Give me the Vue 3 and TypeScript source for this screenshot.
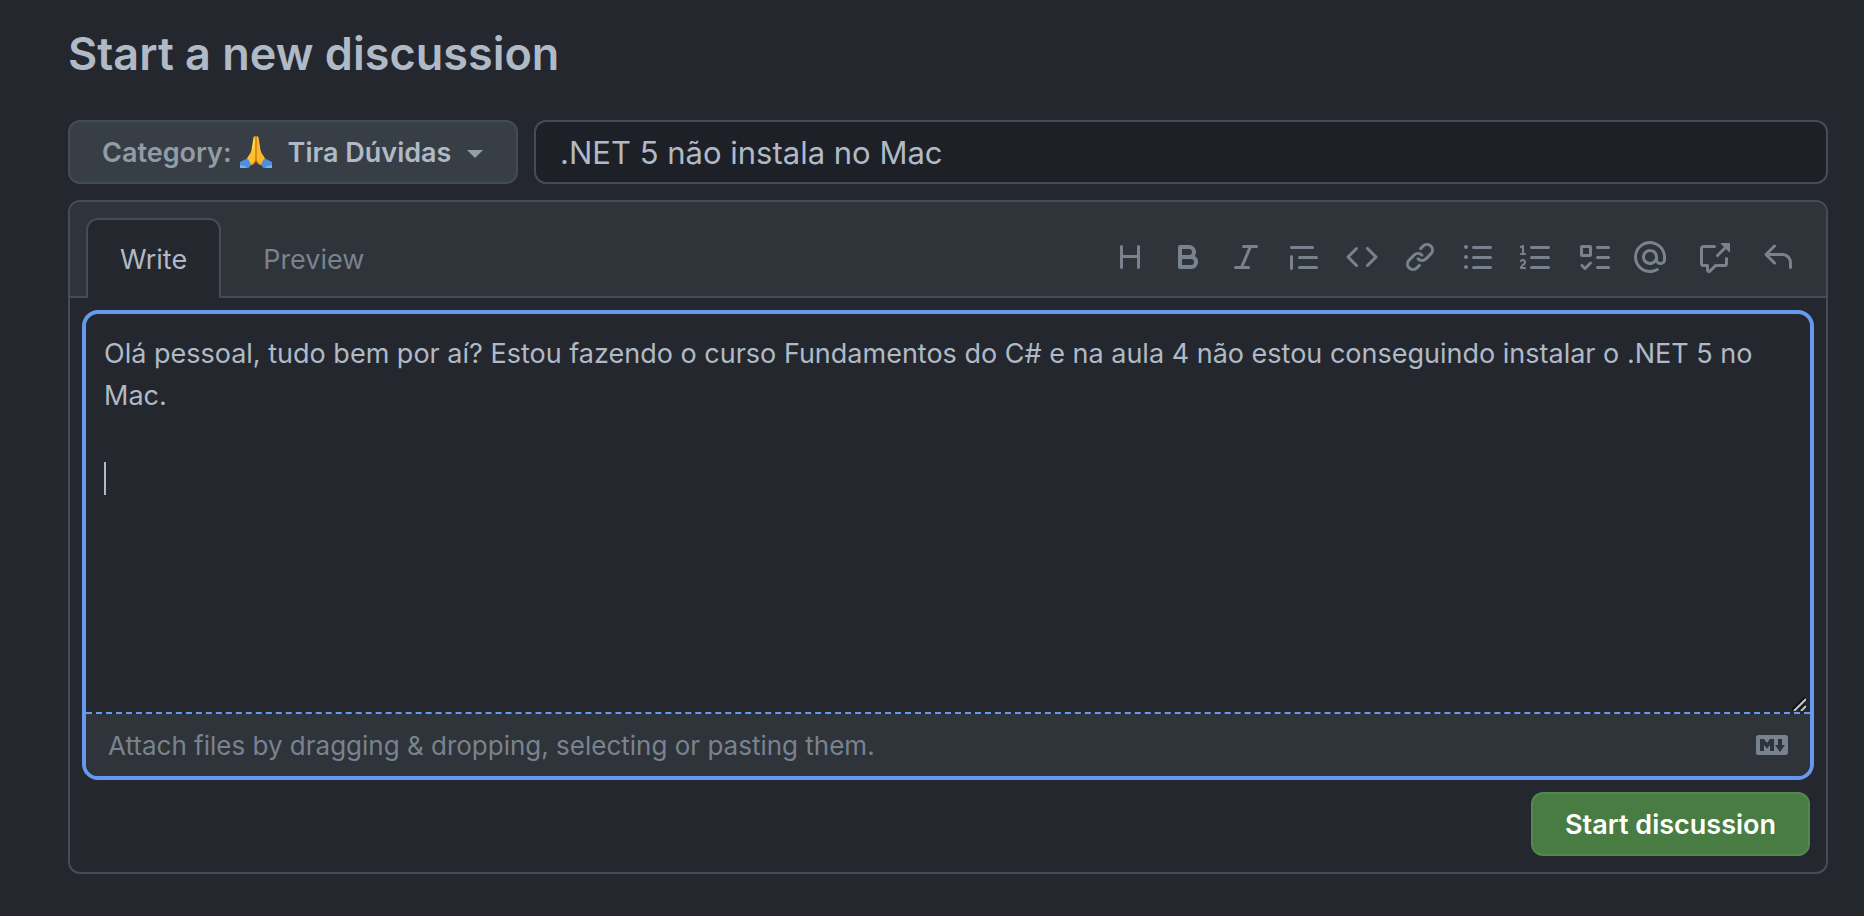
<script setup lang="ts">
import { ref } from 'vue'

interface Tool {
  label: string
  path: string
}

const title = ref('.NET 5 não instala no Mac')
const body = ref(
  'Olá pessoal, tudo bem por aí? Estou fazendo o curso Fundamentos do C# e na aula 4 não estou conseguindo instalar o .NET 5 no Mac.\n\n',
)
const activeTab = ref<'write' | 'preview'>('write')

const formatTools: Tool[] = [
  {
    label: 'Heading',
    path: 'M3.75 2a.75.75 0 01.75.75V7h7V2.75a.75.75 0 011.5 0v10.5a.75.75 0 01-1.5 0V8.5h-7v4.75a.75.75 0 01-1.5 0V2.75A.75.75 0 013.75 2z',
  },
  {
    label: 'Bold',
    path: 'M4 2a1 1 0 00-1 1v10a1 1 0 001 1h5.5a3.5 3.5 0 001.852-6.47A3.5 3.5 0 008.5 2H4zm4.5 5a1.5 1.5 0 100-3H5v3h3.5zM5 9v3h4.5a1.5 1.5 0 000-3H5z',
  },
  {
    label: 'Italic',
    path: 'M6 2.75A.75.75 0 016.75 2h6.5a.75.75 0 010 1.5h-2.505l-3.858 9H9.25a.75.75 0 010 1.5h-6.5a.75.75 0 010-1.5h2.505l3.858-9H6.75A.75.75 0 016 2.75z',
  },
  {
    label: 'Quote',
    path: 'M1.75 2.5a.75.75 0 000 1.5h10.5a.75.75 0 000-1.5H1.75zm4 5a.75.75 0 000 1.5h8.5a.75.75 0 000-1.5h-8.5zm0 5a.75.75 0 000 1.5h8.5a.75.75 0 000-1.5h-8.5zM2.5 7.75a.75.75 0 00-1.5 0v6a.75.75 0 001.5 0v-6z',
  },
  {
    label: 'Code',
    path: 'M4.72 3.22a.75.75 0 011.06 1.06L2.06 8l3.72 3.72a.75.75 0 11-1.06 1.06L.47 8.53a.75.75 0 010-1.06l4.25-4.25zm6.56 0a.75.75 0 10-1.06 1.06L13.94 8l-3.72 3.72a.75.75 0 101.06 1.06l4.25-4.25a.75.75 0 000-1.06l-4.25-4.25z',
  },
  {
    label: 'Link',
    path: 'M7.775 3.275a.75.75 0 001.06 1.06l1.25-1.25a2 2 0 112.83 2.83l-2.5 2.5a2 2 0 01-2.83 0 .75.75 0 00-1.06 1.06 3.5 3.5 0 004.95 0l2.5-2.5a3.5 3.5 0 00-4.95-4.95l-1.25 1.25zm-4.69 9.64a2 2 0 010-2.83l2.5-2.5a2 2 0 012.83 0 .75.75 0 001.06-1.06 3.5 3.5 0 00-4.95 0l-2.5 2.5a3.5 3.5 0 004.95 4.95l1.25-1.25a.75.75 0 00-1.06-1.06l-1.25 1.25a2 2 0 01-2.83 0z',
  },
  {
    label: 'Bulleted list',
    path: 'M2 4a1 1 0 100-2 1 1 0 000 2zm3.75-1.5a.75.75 0 000 1.5h8.5a.75.75 0 000-1.5h-8.5zm0 5a.75.75 0 000 1.5h8.5a.75.75 0 000-1.5h-8.5zm0 5a.75.75 0 000 1.5h8.5a.75.75 0 000-1.5h-8.5zM3 8a1 1 0 11-2 0 1 1 0 012 0zm-1 6a1 1 0 100-2 1 1 0 000 2z',
  },
  {
    label: 'Numbered list',
    path: 'M2.003 2.5a.5.5 0 00-.723-.447l-1.003.5a.5.5 0 00.446.895l.28-.14V6H.5a.5.5 0 000 1h2.006a.5.5 0 100-1h-.503V2.5zM5 3.25a.75.75 0 01.75-.75h8.5a.75.75 0 010 1.5h-8.5A.75.75 0 015 3.25zm0 5a.75.75 0 01.75-.75h8.5a.75.75 0 010 1.5h-8.5A.75.75 0 015 8.25zm0 5a.75.75 0 01.75-.75h8.5a.75.75 0 010 1.5h-8.5a.75.75 0 01-.75-.75zM.924 10.32l.003-.004a.851.851 0 01.144-.153A.66.66 0 011.5 10c.195 0 .306.068.374.146a.57.57 0 01.128.376c0 .453-.269.682-.8 1.078l-.035.025C.692 11.98 0 12.495 0 13.5a.5.5 0 00.5.5h2.003a.5.5 0 000-1H1.146c.132-.197.351-.372.654-.597l.047-.035c.47-.35 1.156-.858 1.156-1.845 0-.365-.118-.744-.377-1.038-.268-.303-.658-.484-1.126-.484-.48 0-.84.202-1.068.392a1.858 1.858 0 00-.348.384l-.01.018a.5.5 0 00.851.525z',
  },
  {
    label: 'Task list',
    path: 'M2 2a1 1 0 00-1 1v4a1 1 0 001 1h4a1 1 0 001-1V3a1 1 0 00-1-1H2zm.5 1.5h3v3h-3v-3zM9.75 2.5a.75.75 0 000 1.5h5.5a.75.75 0 000-1.5h-5.5zm0 5a.75.75 0 000 1.5h5.5a.75.75 0 000-1.5h-5.5zm0 5a.75.75 0 000 1.5h5.5a.75.75 0 000-1.5h-5.5zM6.78 11.53l-2.750 2.750a.75.75 0 01-1.060 0l-1.500-1.500a.75.75 0 111.060-1.060l.97.97 2.220-2.220a.75.75 0 011.060 1.060z',
  },
]

const insertTools: Tool[] = [
  {
    label: 'Mention a user',
    path: 'M4.75 2.37a6.5 6.5 0 006.5 11.26.75.75 0 01.75 1.298 8 8 0 113.994-7.273.754.754 0 01.006.095v1.5a2.75 2.75 0 01-5.072 1.475A4 4 0 1112 8v1.25a1.25 1.25 0 002.5 0V7.867a6.5 6.5 0 00-9.75-5.496V2.37zM10.5 8a2.5 2.5 0 10-5 0 2.5 2.5 0 005 0z',
  },
  {
    label: 'Reference an issue',
    path: 'M16 1.25v4.146a.25.25 0 01-.427.177L14.03 4.03l-3.75 3.75a.75.75 0 11-1.06-1.06l3.75-3.75-1.543-1.543A.25.25 0 0111.604 1h4.146a.25.25 0 01.25.25zM2.75 3.5a.25.25 0 00-.25.25v7.5c0 .138.112.25.25.25h2a.75.75 0 01.75.75v2.19l2.72-2.72a.75.75 0 01.53-.22h4.5a.25.25 0 00.25-.25v-2.5a.75.75 0 111.5 0v2.5A1.75 1.75 0 0113.25 13H9.06l-2.573 2.573A1.457 1.457 0 014 14.543V13H2.75A1.75 1.75 0 011 11.25v-7.5C1 2.784 1.784 2 2.75 2h5.5a.75.75 0 010 1.5h-5.5z',
  },
  {
    label: 'Saved replies',
    path: 'M6.78 1.97a.75.75 0 010 1.06L3.81 6h6.44A4.75 4.75 0 0115 10.75v2.5a.75.75 0 01-1.5 0v-2.5a3.25 3.25 0 00-3.25-3.25H3.81l2.97 2.97a.75.75 0 11-1.06 1.06L1.47 7.28a.75.75 0 010-1.06l4.25-4.25a.75.75 0 011.06 0z',
  },
]
</script>

<template>
  <main class="page">
    <h1 class="heading">Start a new discussion</h1>
    <form @submit.prevent>
      <div class="top-row">
        <button type="button" class="category" aria-haspopup="menu">
          <span class="category-label">Category:</span>
          <svg class="emoji" viewBox="0 0 32 32" aria-hidden="true">
            <path d="M0 26l9-4.500 4 5.500-4.500 5H0z" fill="#4d8fdc" />
            <path d="M32 26l-9-4.500-4 5.500 4.500 5h8.500z" fill="#4d8fdc" />
            <path d="M0 29l5 1 2 2H0zM32 29l-5 1-2 2h7z" fill="#74b0ee" />
            <path d="M15.800 0.500c-1.400-.8-2.300 0-2.500 1.800L11.500 14c-.4 3-3.500 6-4.500 8.500 2 1.500 3.500 4 4 6.500 3-1 4.800-3.500 4.800-7z" fill="#fdc02f" />
            <path d="M16.200 0.500c1.400-.8 2.300 0 2.500 1.800L20.500 14c.4 3 3.500 6 4.500 8.500-2 1.500-3.500 4-4 6.500-3-1-4.800-3.500-4.800-7z" fill="#fdb726" />
            <path d="M16 1v21c0 3-1.800 5.500-4.500 6.700M16 22c0 3 1.800 5.500 4.500 6.700" fill="none" stroke="#d98414" stroke-width="1.200" />
            <path d="M14.200 3L13 15" stroke="#ffdc62" stroke-width="1.200" fill="none" />
          </svg>
          <span class="category-name">Tira Dúvidas</span>
          <span class="caret-down" aria-hidden="true"></span>
        </button>
        <input v-model="title" class="title-input" type="text" aria-label="Title" />
      </div>

      <section class="panel">
        <header class="panel-head">
          <div class="tabs" role="tablist">
            <button
              type="button"
              role="tab"
              class="tab"
              :class="{ active: activeTab === 'write' }"
              :aria-selected="activeTab === 'write'"
              @click="activeTab = 'write'"
            >Write</button>
            <button
              type="button"
              role="tab"
              class="tab"
              :class="{ active: activeTab === 'preview' }"
              :aria-selected="activeTab === 'preview'"
              @click="activeTab = 'preview'"
            >Preview</button>
          </div>
          <div class="toolbar" role="toolbar" aria-label="Formatting">
            <div class="tools format">
              <button v-for="t in formatTools" :key="t.label" type="button" class="tool" :aria-label="t.label">
                <svg viewBox="0 0 16 16" aria-hidden="true"><path fill-rule="evenodd" :d="t.path" /></svg>
              </button>
            </div>
            <div class="tools insert">
              <button v-for="t in insertTools" :key="t.label" type="button" class="tool" :aria-label="t.label">
                <svg viewBox="0 0 16 16" aria-hidden="true"><path fill-rule="evenodd" :d="t.path" /></svg>
              </button>
            </div>
          </div>
        </header>

        <div class="panel-body">
          <div class="editor">
            <div class="field">
              <textarea v-model="body" class="textarea" aria-label="Comment body" spellcheck="false"></textarea>
              <span class="text-caret" aria-hidden="true"></span>
              <svg class="grip" viewBox="0 0 14 14" aria-hidden="true">
                <path d="M0 13L13 0M7 13l6-6" stroke="#101216" stroke-width="2" />
                <path d="M2 14L14 2M9 14l5-5" stroke="#c4c6c9" stroke-width="2" />
              </svg>
            </div>
            <div class="attach">
              <label for="files">Attach files by dragging &amp; dropping, selecting or pasting them.</label>
              <input id="files" class="file-input" type="file" multiple />
              <a class="markdown" href="#" aria-label="Styling with Markdown is supported">
                <svg viewBox="0 0 16 16" aria-hidden="true">
                  <path fill-rule="evenodd" d="M14.85 3H1.150C.52 3 0 3.520 0 4.150v7.690C0 12.480.52 13 1.150 13h13.690c.64 0 1.150-.52 1.150-1.150v-7.700C16 3.520 15.480 3 14.850 3zM9 11H7V8L5.500 9.920 4 8v3H2V5h2l1.500 2L7 5h2v6zm2.990.5L9.500 8H11V5h2v3h1.500l-2.510 3.500z" />
                </svg>
              </a>
            </div>
          </div>
          <div class="actions">
            <button type="submit" class="submit">Start discussion</button>
          </div>
        </div>
      </section>
    </form>
  </main>
</template>

<style>
body {
  margin: 0;
  background: #24272e;
}
</style>

<style scoped>
.page {
  box-sizing: border-box;
  padding: 18px 36px 42px 68px;
  font-family: Inter, 'Liberation Sans', sans-serif;
  color: #afbac6;
}

.page *,
.page *::before {
  box-sizing: border-box;
}

button,
input,
textarea {
  margin: 0;
  font: inherit;
  color: inherit;
}

button {
  cursor: pointer;
}

.heading {
  margin: 0 0 30px;
  font-size: 45px;
  line-height: 72px;
  font-weight: 600;
}

.top-row {
  display: flex;
  gap: 16px;
  margin-bottom: 16px;
}

.category {
  display: flex;
  align-items: center;
  width: 450px;
  height: 64px;
  padding: 0 32px;
  border: 2px solid #464c55;
  border-radius: 12px;
  background: #383e45;
  font-size: 27px;
  font-weight: 600;
  white-space: nowrap;
}

.category-label {
  color: #929ca7;
}

.emoji {
  width: 32px;
  height: 32px;
  margin: 0 16px 0 8px;
}

.caret-down {
  margin: 4px 0 0 16px;
  border: 8px solid transparent;
  border-top-color: #949ea9;
  border-bottom: 0;
}

.title-input {
  flex: 1;
  min-width: 0;
  height: 64px;
  padding: 0 24px;
  border: 2px solid #464c55;
  border-radius: 12px;
  background: #1e2027;
  font-size: 31px;
  outline: 0;
}

.panel {
  border: 2px solid #464c55;
  border-radius: 12px;
}

.panel-head {
  display: flex;
  justify-content: space-between;
  padding: 16px 32px 0 16px;
  border-bottom: 2px solid #464c55;
  border-radius: 10px 10px 0 0;
  background: #2f333a;
}

.tabs {
  display: flex;
  margin-bottom: -2px;
}

.tab {
  height: 80px;
  padding: 0 32px;
  border: 2px solid transparent;
  border-bottom: 0;
  border-radius: 12px 12px 0 0;
  background: transparent;
  color: #79838f;
  font-size: 27px;
}

.tab + .tab {
  margin-left: 8px;
}

.tab.active {
  border-color: #464c55;
  background: #24272e;
  color: #afbac6;
}

.toolbar {
  display: flex;
  align-items: center;
  gap: 24px;
}

.tools {
  display: flex;
}

.format {
  gap: 26px;
}

.insert {
  gap: 32px;
}

.tool {
  width: 32px;
  height: 32px;
  padding: 0;
  border: 0;
  background: none;
}

.tool svg,
.markdown svg {
  display: block;
  width: 32px;
  height: 32px;
  fill: #79838f;
}

.panel-body {
  padding: 12px;
}

.editor {
  overflow: hidden;
  border: 4px solid #6599ee;
  border-radius: 16px;
}

.field {
  position: relative;
}

.textarea {
  display: block;
  width: 100%;
  height: 400px;
  padding: 19px 18px;
  border: 0;
  border-bottom: 2px dashed #6599ee;
  background: transparent;
  outline: 0;
  resize: none;
  font-size: 27px;
  line-height: 42px;
}

.text-caret {
  position: absolute;
  top: 148px;
  left: 18px;
  width: 2px;
  height: 33px;
  background: #afbac6;
}

.grip {
  position: absolute;
  right: 4px;
  bottom: 3px;
  width: 14px;
  height: 14px;
}

.attach {
  display: flex;
  align-items: center;
  justify-content: space-between;
  height: 62px;
  padding: 0 22px;
  background: #2f333a;
  color: #79838f;
  font-size: 26px;
}

.file-input {
  display: none;
}

.actions {
  display: flex;
  justify-content: flex-end;
  padding: 12px 4px 4px;
}

.submit {
  height: 64px;
  padding: 0 32px;
  border: 2px solid #578751;
  border-radius: 12px;
  background: #497c42;
  color: #ffffff;
  font-size: 27px;
  font-weight: 600;
}
</style>
